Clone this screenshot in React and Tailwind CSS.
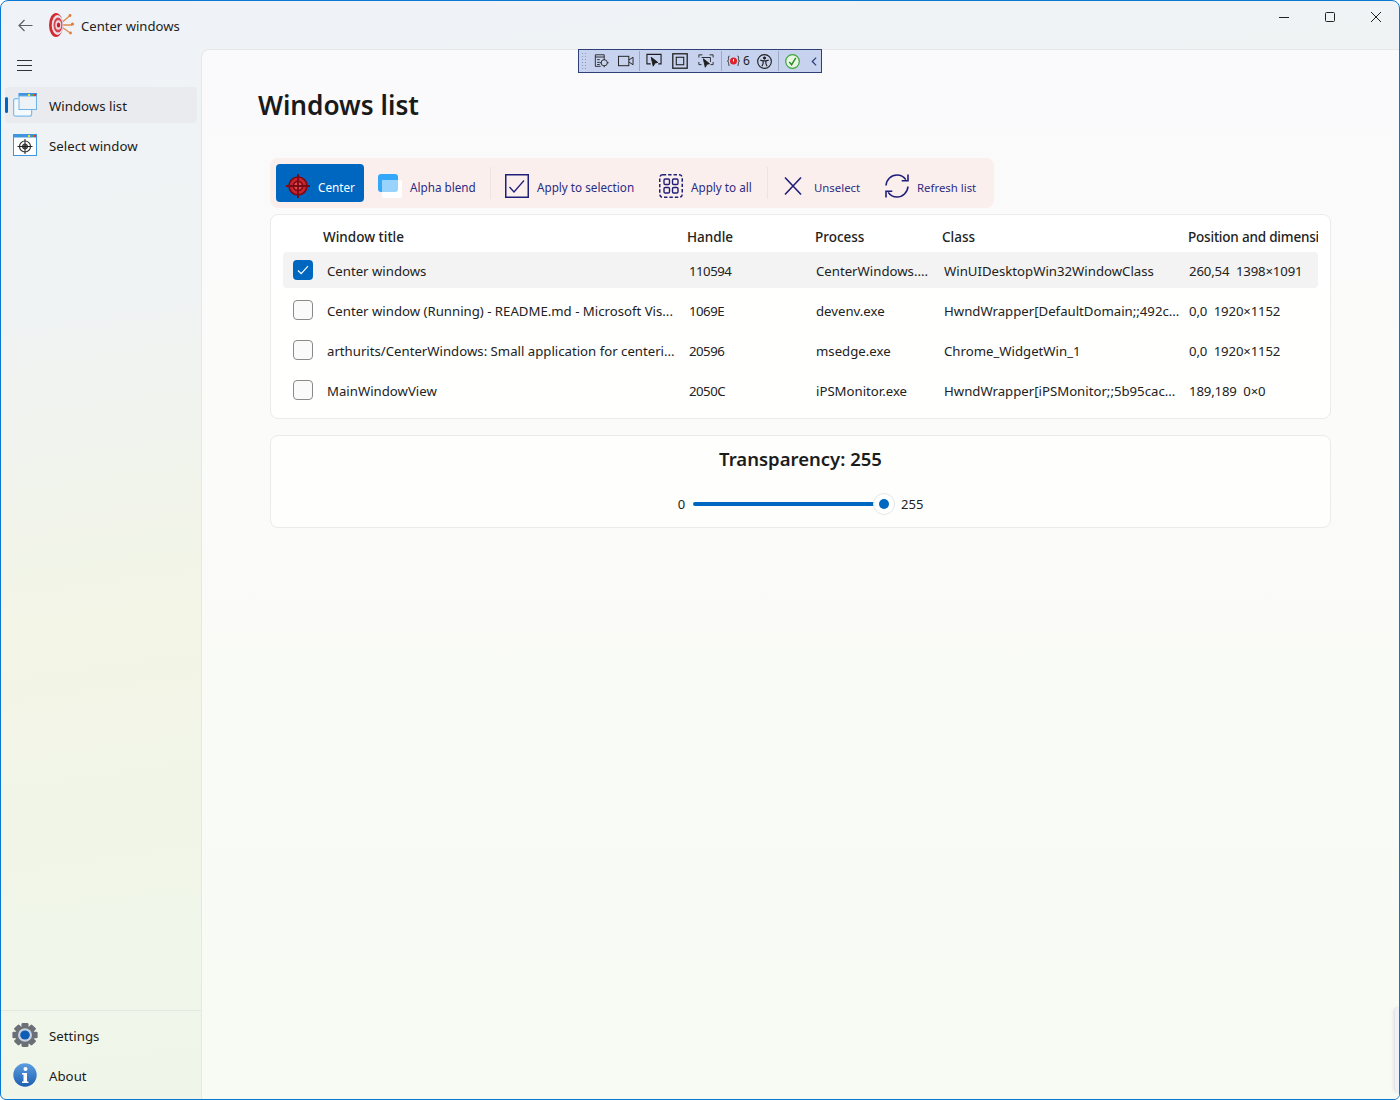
import React from "react";

const rows = [
  { t: "Center windows", h: "110594", p: "CenterWindows....", c: "WinUIDesktopWin32WindowClass", d: "260,54\u00a0\u00a01398×1091", on: true },
  { t: "Center window (Running) - README.md - Microsoft Vis...", h: "1069E", p: "devenv.exe", c: "HwndWrapper[DefaultDomain;;492c...", d: "0,0\u00a0\u00a01920×1152" },
  { t: "arthurits/CenterWindows: Small application for centeri...", h: "20596", p: "msedge.exe", c: "Chrome_WidgetWin_1", d: "0,0\u00a0\u00a01920×1152" },
  { t: "MainWindowView", h: "2050C", p: "iPSMonitor.exe", c: "HwndWrapper[iPSMonitor;;5b95cac...", d: "189,189\u00a0\u00a00×0" },
];

function Target() {
  return (
    <svg width="26" height="26" viewBox="0 0 26 26" fill="none">
      <circle cx="13" cy="13" r="9" fill="#c8242c" stroke="#7a0a14" strokeWidth="1.6" />
      <circle cx="13" cy="13" r="4.6" fill="#e04a50" stroke="#7a0a14" strokeWidth="1.6" />
      <path d="M13 1v24M1 13h24" stroke="#7a0a14" strokeWidth="1.8" />
    </svg>
  );
}
function Alpha() {
  return (
    <svg width="24" height="24" viewBox="0 0 24 24">
      <rect x="0" y="0" width="20" height="18" rx="3" fill="#35a7f8" />
      <rect x="4" y="6" width="20" height="18" rx="2" fill="#ffffff" />
      <path d="M4 8a2 2 0 0 1 2-2h14v9a3 3 0 0 1-3 3H4z" fill="#97d3fb" />
    </svg>
  );
}
function ApplySel() {
  return (
    <svg width="24" height="24" viewBox="0 0 24 24" fill="none" stroke="#1f1f7a">
      <rect x=".75" y=".75" width="22.5" height="22.5" strokeWidth="1.5" />
      <path d="M4.5 13l4.5 5L19 6.5" strokeWidth="1.3" />
    </svg>
  );
}
function ApplyAll() {
  return (
    <svg width="24" height="24" viewBox="0 0 24 24" fill="none" stroke="#1f1f7a">
      <rect x=".75" y=".75" width="22.5" height="22.5" rx="3" strokeWidth="1.5" strokeDasharray="3.4 2" />
      <rect x="5" y="5" width="5.5" height="5.5" rx="1.2" strokeWidth="1.4" />
      <rect x="13.5" y="5" width="5.5" height="5.5" rx="1.2" strokeWidth="1.4" />
      <rect x="5" y="13.5" width="5.5" height="5.5" rx="1.2" strokeWidth="1.4" />
      <rect x="13.5" y="13.5" width="5.5" height="5.5" rx="1.2" strokeWidth="1.4" />
    </svg>
  );
}
function Cross() {
  return (
    <svg width="20" height="20" viewBox="0 0 20 20" fill="none" stroke="#1f1f7a" strokeWidth="1.6">
      <path d="M2 1.5l16 17M18 1.5l-16 17" />
    </svg>
  );
}
function Refresh() {
  return (
    <svg width="26" height="26" viewBox="0 0 26 26" fill="none" stroke="#1f1f7a" strokeWidth="1.6">
      <path d="M2 12.5C2.5 6.5 7.2 2 13 2c3.6 0 6.8 1.7 8.8 4.6" />
      <path d="M24 1.5v6.3h-6.3" />
      <path d="M24 13.5C23.5 19.500 18.800 24 13 24c-3.600 0-6.800-1.700-8.800-4.600" />
      <path d="M2 24.500v-6.300h6.300" />
    </svg>
  );
}
function AppLogo() {
  return (
    <svg width="26" height="24" viewBox="0 0 26 24" fill="none">
      <path d="M10 12L20.500 3M10 12h13M10 12l10.500 7.500" stroke="#e08a4a" strokeWidth="1.300" />
      <ellipse cx="7" cy="12" rx="7" ry="12" fill="#d42a2e" />
      <ellipse cx="8.500" cy="12" rx="5.800" ry="10" fill="#e6e3ef" />
      <ellipse cx="9" cy="12" rx="4.500" ry="7.500" fill="#d9434a" />
      <ellipse cx="9.300" cy="12" rx="3" ry="4.800" fill="#e8d8e0" />
      <ellipse cx="9.500" cy="12" rx="1.700" ry="2.500" fill="#c5202a" />
      <circle cx="21" cy="2.500" r="1.400" fill="#e07a3a" />
      <circle cx="23.500" cy="11" r="1.600" fill="#e07a3a" />
      <circle cx="21.500" cy="20" r="1.400" fill="#e07a3a" />
    </svg>
  );
}
function WinListIcon() {
  return (
    <svg width="24" height="24" viewBox="0 0 24 24">
      <rect x=".6" y="5.600" width="18" height="17.600" rx="2" fill="#f4f9fd" stroke="#7dbdec" strokeWidth="1.200" />
      <rect x="5.500" y="0" width="18.500" height="17" fill="#ffffff" />
      <rect x="5.500" y="0" width="18.500" height="3.500" fill="#3f96df" />
      <rect x="6" y="3" width="17.500" height="13.500" fill="#edf2f7" stroke="#6fb2e8" strokeWidth="1" />
      <rect x="15" y="1" width="2" height="2" fill="#f4e23e" />
      <rect x="18" y="1" width="2" height="2" fill="#3ba55c" />
      <rect x="21" y="1" width="2" height="2" fill="#e0323c" />
    </svg>
  );
}
function SelectIcon() {
  return (
    <svg width="24" height="22" viewBox="0 0 24 22" fill="none">
      <rect x=".5" y=".5" width="23" height="21" fill="#fff" stroke="#3f96df" />
      <rect x="0" y="0" width="24" height="3.500" fill="#3f96df" />
      <rect x="15" y="1" width="2" height="2" fill="#f4e23e" />
      <rect x="18" y="1" width="2" height="2" fill="#3ba55c" />
      <rect x="21" y="1" width="2" height="2" fill="#e0323c" />
      <circle cx="12" cy="12.500" r="5.500" stroke="#333" strokeWidth="1.200" />
      <circle cx="12" cy="12.500" r="2.600" fill="#666" stroke="#333" />
      <path d="M12 5v15M4.500 12.500h15" stroke="#222" />
    </svg>
  );
}
function Gear() {
  const teeth = [0, 45, 90, 135, 180, 225, 270, 315];
  return (
    <svg width="26" height="24" viewBox="0 0 26 24">
      <g transform="translate(13 12) scale(1 .95)">
        {teeth.map((a) => (
          <rect key={a} x="-3.500" y="-12.600" width="7" height="6" rx="1.200" fill="#6b6f76" transform={`rotate(${a})`} />
        ))}
        <circle r="9.600" fill="#6b6f76" />
        <circle r="7" fill="#c9d3e0" />
        <circle r="4.800" fill="#0f5eb5" />
      </g>
    </svg>
  );
}
function Info() {
  return (
    <svg width="24" height="24" viewBox="0 0 24 24">
      <defs>
        <linearGradient id="ig" x1="0" y1="0" x2="0" y2="1">
          <stop offset="0" stopColor="#5d9de0" />
          <stop offset="1" stopColor="#1c5fb0" />
        </linearGradient>
      </defs>
      <circle cx="12" cy="12" r="11.700" fill="url(#ig)" />
      <circle cx="12.500" cy="6" r="2" fill="#fff" />
      <path d="M9 10h5v8.500h1.500V20H9v-1.500h1.500V11.500H9z" fill="#fff" />
    </svg>
  );
}

function ToolBtn({ icon, label, w, pl = 14, gap = 8, active, small }) {
  return (
    <div
      className={`flex h-[38px] shrink-0 items-center rounded-[4px] pt-[6px] ${active ? "bg-[#0067c0] text-white" : "text-[#2c2c82]"}`}
      style={{ width: w, paddingLeft: pl }}
    >
      <span className="flex shrink-0 items-center justify-center" style={{ marginRight: gap }}>{icon}</span>
      <span className={`whitespace-nowrap pt-[3px] ${small ? "text-[11.4px]" : "text-[11.7px]"}`}>{label}</span>
    </div>
  );
}
const Sep = () => <div className="h-[32px] w-px shrink-0 bg-[#ece3e2]" />;

function DebugBar() {
  const s = { stroke: "#1e1e1e", fill: "none" };
  const sep = "h-[20px] w-px shrink-0 bg-[#9aa8c4]";
  return (
    <div className="absolute left-[577px] top-[48px] z-10 flex h-[24px] w-[244px] items-center border border-[#2f3f78] bg-[#c7d3ee]">
      <div className="ml-[2px] h-[18px] w-[6px] shrink-0 bg-[radial-gradient(#8e9abb_0.8px,transparent_0.8px)] bg-[length:3px_3px]" />
      <svg className="ml-[7px] shrink-0" width="16" height="16" viewBox="0 0 18 16" {...s}><path d="M1.500 1h10v4M1.500 1v13h6M1.500 3.500h10M3.500 6.500h3M3.500 9.500h3M3.500 12h3" /><circle cx="11.500" cy="10" r="3.500" /><path d="M11.500 5v2M11.500 13v2M6.500 10h2M14.500 10h2" /></svg>
      <svg className="ml-[8px] shrink-0" width="16" height="12" viewBox="0 0 17 12" {...s}><rect x=".5" y="1" width="11" height="10" /><path d="M11.500 5l4.500-3v8l-4.500-3" /></svg>
      <div className={`ml-[5px] ${sep}`} />
      <svg className="ml-[6px] shrink-0" width="16" height="16" viewBox="0 0 17 16" {...s}><path d="M5 11H1V1h15v10h-3" strokeWidth="1.200" /><path d="M5.500 4l7 5.500-3 .6-1.800 3.400z" fill="#1e1e1e" /></svg>
      <svg className="ml-[10px] shrink-0" width="16" height="16" viewBox="0 0 15 15" {...s}><rect x=".75" y=".75" width="13.500" height="13.500" strokeWidth="1.200" /><rect x="4" y="4" width="7" height="7" /></svg>
      <svg className="ml-[10px] shrink-0" width="16" height="17" viewBox="0 0 18 17" {...s}><path d="M1 4V1h4M13 1h4v3M1 9v3h3M17 9v3h-3M4 4h10v5" /><path d="M6 5.500l7 5.500-3 .6-1.800 3.400z" fill="#1e1e1e" /></svg>
      <div className={`ml-[7px] ${sep}`} />
      <svg className="ml-[5px] shrink-0" width="13" height="12" viewBox="0 0 13 12" fill="none"><circle cx="6.500" cy="6" r="3.500" fill="#e0202a" /><path d="M6.500 4v2.500" stroke="#fff" /><path d="M2.500 1C1 1 1.500 3 1.500 4.500S.5 6 .5 6s1 .2 1 1.500.5 3.500 1 3.500M10.500 1c1.500 0 1 2 1 3.500s1 1.500 1 1.500-1 .2-1 1.500-.5 3.500-1 3.500" stroke="#222" strokeWidth=".9" /></svg>
      <span className="ml-[3px] w-[7px] shrink-0 text-[12px] leading-none text-[#222]">6</span>
      <svg className="ml-[7px] shrink-0" width="15" height="15" viewBox="0 0 16 16" {...s}><circle cx="8" cy="8" r="7.300" strokeWidth="1.200" /><circle cx="8" cy="4.300" r="1.200" fill="#1e1e1e" /><path d="M3.500 6.500l3 .8v3L5.300 13M12.500 6.500l-3 .8v3l1.200 2.700M6.500 7.300h3" strokeWidth="1.200" /></svg>
      <div className={`ml-[6px] ${sep}`} />
      <svg className="ml-[6px] shrink-0" width="15" height="15" viewBox="0 0 15 15" fill="none"><circle cx="7.500" cy="7.500" r="6.800" fill="#e8f5e0" stroke="#3ba63b" strokeWidth="1.200" /><path d="M4.300 8l2.300 2.700L10.800 3.800" stroke="#2b8a2b" strokeWidth="1.400" /></svg>
      <svg className="ml-[11px] shrink-0" width="6" height="11" viewBox="0 0 7 11" fill="none"><path d="M6 1L1.500 5.500 6 10" stroke="#2f3f78" strokeWidth="1.500" /></svg>
    </div>
  );
}

function Nav({ icon, label, active, iconPl = 8 }) {
  return (
    <div className={`relative mx-[4px] flex h-[36px] items-center rounded-[4px] ${active ? "bg-[#e9ebee]" : ""}`}>
      {active && <div className="absolute left-0 top-[10px] h-[16px] w-[3px] rounded-full bg-[#0067c0]" />}
      <span className="flex w-[44px] shrink-0 items-center" style={{ paddingLeft: iconPl }}>{icon}</span>
      <span className="translate-y-[2px] text-[13.25px] text-[#1b1b1b]">{label}</span>
    </div>
  );
}

export default function App() {
  return (
    <div className="relative flex h-[1100px] w-[1400px] flex-col overflow-hidden rounded-t-[8px] rounded-b-[6px] border border-[#0a78d0] bg-[linear-gradient(172deg,#eff3f8_0%,#f0f3f3_25%,#f3f5e6_50%,#f0f6ea_75%,#eff6e9_100%)] font-['Noto_Sans',sans-serif] text-[#1b1b1b]">
      <div className="flex h-[48px] shrink-0 items-center">
        <svg className="ml-[17px]" width="15" height="13" viewBox="0 0 15 13" fill="none" stroke="#5f6063" strokeWidth="1.200"><path d="M14.500 6.500H1M6.500 1L1 6.500 6.500 12" /></svg>
        <span className="ml-[16px]"><AppLogo /></span>
        <span className="ml-[6px] translate-y-[2px] text-[13.100px] text-[#222]">Center windows</span>
        <div className="ml-auto flex items-center pr-[18px]">
          <div className="mr-[36px] h-px w-[10px] translate-y-[-8px] bg-[#222]" />
          <div className="mr-[36px] h-[10px] w-[10px] translate-y-[-8px] rounded-[1.500px] border border-[#222]" />
          <svg className="translate-y-[-8px]" width="10" height="10" viewBox="0 0 10 10" stroke="#222"><path d="M0 0l10 10M10 0L0 10" /></svg>
        </div>
      </div>
      <DebugBar />
      <div className="flex min-h-0 flex-1">
        <aside className="flex w-[200px] shrink-0 flex-col">
          <div className="flex h-[38px] items-start pl-[16px] pt-[11px]">
            <svg width="15" height="11" viewBox="0 0 15 11" stroke="#333"><path d="M0 .5h15M0 5.500h15M0 10.500h15" /></svg>
          </div>
          <div className="flex flex-col gap-[4px]">
            <Nav active icon={<WinListIcon />} label="Windows list" />
            <Nav icon={<SelectIcon />} label="Select window" />
          </div>
          <div className="mt-auto flex flex-col gap-[4px] border-t border-[#e3e8e2] pb-[6px] pt-[6px]">
            <Nav icon={<Gear />} label="Settings" iconPl={7} />
            <Nav icon={<Info />} label="About" />
          </div>
        </aside>
        <main className="min-w-0 flex-1 rounded-tl-[8px] border-l border-t border-[#e6e8e8] bg-[linear-gradient(180deg,#fafafc_0%,#fbfbf9_40%,#f7fbf3_100%)] pl-[56px] pr-[68px]">
          <h1 className="mt-[35px] h-[40px] text-[26.2px] font-semibold leading-[40px] text-[#1a1a1a]">Windows list</h1>
          <div className="ml-[12px] mt-[33px] flex h-[50px] w-[724px] items-center rounded-[8px] bg-[#fbefee] pl-[6px]">
            <ToolBtn active w={88} pl={9} gap={7} icon={<Target />} label="Center" />
            <ToolBtn w={126} icon={<Alpha />} label="Alpha blend" />
            <Sep />
            <ToolBtn w={154} icon={<ApplySel />} label="Apply to selection" />
            <ToolBtn w={122} icon={<ApplyAll />} label="Apply to all" />
            <Sep />
            <ToolBtn w={102} pl={15} gap={11} icon={<Cross />} label="Unselect" small />
            <ToolBtn w={110} gap={7} icon={<Refresh />} label="Refresh list" small />
          </div>
          <section className="ml-[12px] mt-[6px] h-[205px] rounded-[8px] border border-[#ebebeb] bg-[#ffffff]/90 pl-[12px] pr-[12px] pt-[5px]">
            <div className="grid h-[32px] translate-y-px grid-cols-[40px_364px_128px_127px_246px_130px] items-center overflow-hidden text-[13.5px] font-medium text-[#222]">
              <span />
              <span>Window title</span>
              <span>Handle</span>
              <span>Process</span>
              <span>Class</span>
              <span className="whitespace-nowrap tracking-[-0.2px]">Position and dimensi</span>
            </div>
            {rows.map((r) => (
              <div key={r.t} className={`mb-[4px] grid h-[36px] grid-cols-[44px_362px_127px_128px_245px_1fr] items-center rounded-[4px] text-[13.2px] text-[#222] ${r.on ? "bg-[#f3f3f3]" : ""}`}>
                <span className="pl-[10px]">
                  {r.on ? (
                    <span className="flex h-[20px] w-[20px] items-center justify-center rounded-[4px] bg-[#0067c0]">
                      <svg width="12" height="10" viewBox="0 0 12 10" fill="none" stroke="#fff" strokeWidth="1.200"><path d="M1 5.500L4.200 8.700 11 1.200" /></svg>
                    </span>
                  ) : (
                    <span className="block h-[20px] w-[20px] rounded-[4px] border border-[#8a8a8a] bg-[#fafafa]" />
                  )}
                </span>
                <span className="translate-y-[2px] whitespace-nowrap">{r.t}</span>
                <span className="translate-y-[2px] tracking-[-0.5px]">{r.h}</span>
                <span className="translate-y-[2px] whitespace-nowrap">{r.p}</span>
                <span className="translate-y-[2px] whitespace-nowrap">{r.c}</span>
                <span className="translate-y-[2px] whitespace-nowrap tracking-[-0.15px]">{r.d}</span>
              </div>
            ))}
          </section>
          <section className="ml-[12px] mt-[16px] flex h-[93px] flex-col items-center rounded-[8px] border border-[#ebebeb] bg-[#ffffff]/70">
            <div className="mt-[9px] h-[28px] text-[18.5px] font-semibold leading-[28px] text-[#1c1c1c]">Transparency: 255</div>
            <div className="mt-[19px] flex h-[24px] items-center text-[13px] text-[#222]">
              <span className="translate-y-px">0</span>
              <div className="relative ml-[8px] h-[22px] w-[202px]">
                <div className="absolute left-0 top-[9px] h-[4px] w-[184px] rounded-full bg-[#0067c0]" />
                <div className="absolute right-0 top-0 flex h-[22px] w-[22px] items-center justify-center rounded-full border border-[#e6e6e6] bg-white">
                  <div className="h-[10px] w-[10px] rounded-full bg-[#0067c0]" />
                </div>
              </div>
              <span className="ml-[6px] translate-y-px">255</span>
            </div>
          </section>
        </main>
      </div>
      <div className="absolute bottom-[6px] right-0 h-[86px] w-[5px] rounded-l-[5px] border-l border-[#e4e4e4] bg-[#f2eff6] shadow-[-1px_0_3px_rgba(0,0,0,0.08)]" />
    </div>
  );
}
